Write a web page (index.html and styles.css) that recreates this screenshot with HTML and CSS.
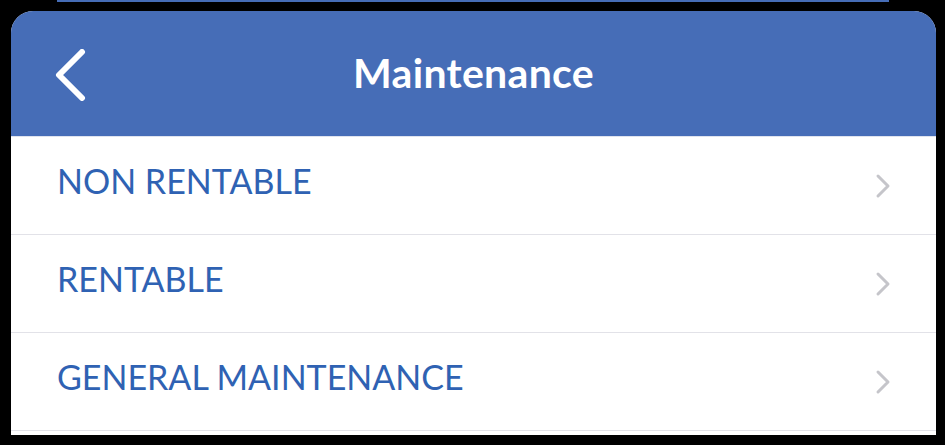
FILE: index.html
```html
<!DOCTYPE html>
<html>
<head>
<meta charset="utf-8">
<link rel="stylesheet" href="styles.css">
</head>
<body>
<div class="topline"></div>
<div class="card">
  <header class="header">
    <div class="back">
      <svg width="32" height="52" viewBox="0 0 32 52">
        <polyline points="27,3 4,26 27,49" fill="none" stroke="#ffffff" stroke-width="6" stroke-linecap="round" stroke-linejoin="round"/>
      </svg>
    </div>
    <h1 class="title">Maintenance</h1>
    <div class="spacer"></div>
  </header>
  <ul class="list">
    <li class="row"><span class="label">NON RENTABLE</span><svg class="chev" width="16" height="26" viewBox="0 0 16 26"><polyline points="3,3 13,13 3,23" fill="none" stroke="#c5c5ca" stroke-width="3" stroke-linecap="round" stroke-linejoin="round"/></svg></li>
    <li class="row"><span class="label">RENTABLE</span><svg class="chev" width="16" height="26" viewBox="0 0 16 26"><polyline points="3,3 13,13 3,23" fill="none" stroke="#c5c5ca" stroke-width="3" stroke-linecap="round" stroke-linejoin="round"/></svg></li>
    <li class="row"><span class="label">GENERAL MAINTENANCE</span><svg class="chev" width="16" height="26" viewBox="0 0 16 26"><polyline points="3,3 13,13 3,23" fill="none" stroke="#c5c5ca" stroke-width="3" stroke-linecap="round" stroke-linejoin="round"/></svg></li>
  </ul>
</div>
</body>
</html>
```
FILE: styles.css
```css
html, body {
  margin: 0;
  padding: 0;
  background: #000000;
  width: 945px;
  height: 445px;
  overflow: hidden;
}
.topline {
  height: 2px;
  margin: 0 56px 0 57px;
  background: #466db7;
}
.card {
  margin: 9px 0 0 11px;
  width: 925px;
  background: #ffffff;
  border-radius: 22px 22px 0 0;
  overflow: hidden;
  padding-bottom: 4px;
}
.header {
  height: 126px;
  background: #466db7;
  display: grid;
  grid-template-columns: 1fr auto 1fr;
  align-items: center;
  border-bottom: 1px solid #dfe3ee;
  box-sizing: border-box;
}
.back {
  padding-left: 44px;
  display: flex;
  align-items: center;
  padding-top: 2px;
}
.back svg { display: block; }
.title {
  margin: 0;
  font-family: "Lato", "Open Sans", sans-serif;
  font-weight: 700;
  font-size: 41px;
  color: #ffffff;
  letter-spacing: 0.3px;
  padding-bottom: 2px;
}
.list {
  list-style: none;
  margin: 0;
  padding: 0;
}
.row {
  height: 97px;
  border-bottom: 1px solid #e2e2e8;
  display: flex;
  align-items: center;
  justify-content: space-between;
  padding: 0 45px 0 46px;
  box-sizing: content-box;
}
.label {
  font-family: "Lato", "Open Sans", sans-serif;
  font-weight: 400;
  font-size: 34px;
  color: #2f62b3;
  margin-top: -10px;
}
.chev {
  display: block;
}
```
